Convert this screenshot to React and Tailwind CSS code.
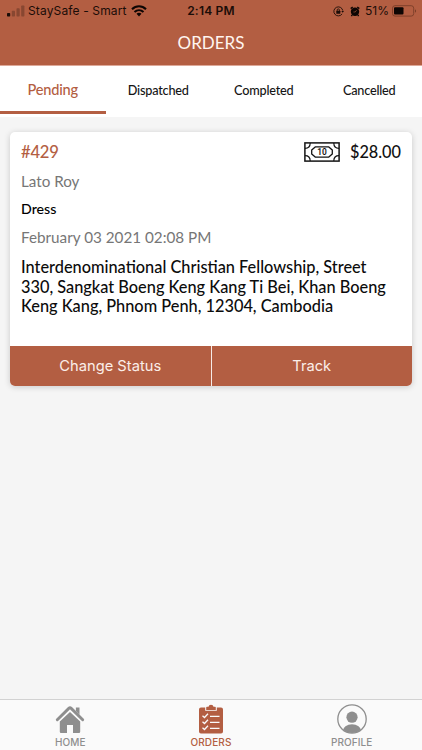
const tabs = ['Pending', 'Dispatched', 'Completed', 'Cancelled']

function SignalIcon() {
  return (
    <svg width="18" height="12" viewBox="0 0 18 12" className="shrink-0 fill-[#1b0d08]">
      <rect x="0" y="8" width="3.2" height="3.4" rx="0.7" />
      <g opacity="0.28">
        <rect x="4.8" y="5.8" width="3.2" height="5.6" rx="0.7" />
        <rect x="9.5" y="3.2" width="3.2" height="8.2" rx="0.7" />
        <rect x="14.2" y="0.6" width="3.2" height="10.8" rx="0.7" />
      </g>
    </svg>
  )
}

function WifiIcon() {
  return (
    <svg width="16" height="12" viewBox="0 0 16 12" className="shrink-0" fill="none" stroke="#0d0503">
      <path d="M1 4.2C5 0.3 11 0.3 15 4.2" strokeWidth="2.1" />
      <path d="M3.5 7C6.1 4.5 9.9 4.5 12.5 7" strokeWidth="2" />
      <path d="M8 11.4 5.5 8.8C7 7.5 9 7.5 10.5 8.8Z" fill="#0d0503" stroke="none" />
    </svg>
  )
}

function RotationLockIcon() {
  return (
    <svg width="11" height="11" viewBox="0 0 11 11" className="shrink-0" fill="none" stroke="#1b0d08">
      <path d="M9.1 7.9A4.5 4.5 0 1 1 9.8 4.6" strokeWidth="0.9" />
      <path d="M8.3 5h2.7L9.7 6.7Z" fill="#1b0d08" stroke="none" />
      <rect x="3.3" y="4.8" width="4" height="3" rx="0.4" fill="#1b0d08" stroke="none" />
      <path d="M4.2 5V4a1.1 1.1 0 0 1 2.2 0v1" strokeWidth="0.8" />
    </svg>
  )
}

function AlarmIcon() {
  return (
    <svg width="10" height="11" viewBox="0 0 10 11" className="shrink-0" fill="none" stroke="#0d0503">
      <circle cx="5" cy="5.7" r="4.2" fill="#0d0503" stroke="none" />
      <path d="M0.7 2.6 2.7 1M9.3 2.6 7.3 1M2.2 9 1.4 10.2M7.8 9 8.6 10.2" strokeWidth="1.4" />
      <path d="M5.2 6 6.6 4.2M5.3 6H3.4" stroke="#b35e42" strokeWidth="0.6" />
    </svg>
  )
}

function BatteryIcon() {
  return (
    <svg width="25" height="12" viewBox="0 0 25 12" className="shrink-0">
      <rect x="0.5" y="0.7" width="21.2" height="10.4" rx="2.5" fill="none" stroke="#7a3d28" strokeWidth="0.9" />
      <rect x="2" y="2.2" width="9.5" height="7.4" rx="1" fill="#0d0503" />
      <path d="M23 4.2v3.5c1.4-0.4 1.4-3.1 0-3.5Z" fill="#7a3d28" />
    </svg>
  )
}

function BanknoteIcon() {
  return (
    <svg width="36" height="20" viewBox="0 0 36 20" fill="none" stroke="#151515" strokeWidth="1.5">
      <rect x="0.9" y="0.9" width="34.2" height="18.2" />
      <path d="M1 6.3C4.2 6.3 6.2 4.2 6.2 1M35 6.3C31.8 6.3 29.8 4.2 29.8 1M1 13.7C4.2 13.7 6.2 15.8 6.2 19M35 13.7C31.8 13.7 29.8 15.8 29.8 19" strokeWidth="1.2" />
      <path d="M11.2 4.9H24.8L28.3 8.1V11.9L24.8 15.1H11.2L7.7 11.9V8.1Z" strokeWidth="1.3" strokeLinejoin="round" />
      <text x="18" y="13" textAnchor="middle" fill="#151515" stroke="none" fontFamily="Roboto, sans-serif" fontSize="8.4" fontWeight="600">10</text>
    </svg>
  )
}

function HomeIcon() {
  return (
    <svg width="30" height="29" viewBox="0 0 30 29" fill="#8e8e8e">
      <path d="M20.9 2.4h3.6v7.3l-3.6-3.6Z" />
      <path d="M4.8 16.6 15 7 25.2 16.6V26.8Q25.2 28 24 28H18V20H12V28H6Q4.8 28 4.8 26.8Z" />
      <path d="M3.4 16.6 15 5.8 26.6 16.6" fill="none" stroke="#fafafa" strokeWidth="0.9" />
      <path d="M2.3 14.8 13.8 3.4Q15 2.3 16.2 3.4L27.7 14.8" fill="none" stroke="#8e8e8e" strokeWidth="2.9" strokeLinecap="round" />
    </svg>
  )
}

function OrdersIcon() {
  return (
    <svg width="24" height="30" viewBox="0 0 24 30" fill="#b35e42">
      <path d="M2 3.5H6.2V6.8H17.8V3.5H22Q24 3.5 24 5.5V27.5Q24 29.5 22 29.5H2Q0 29.5 0 27.5V5.5Q0 3.5 2 3.5Z" />
      <path d="M7.2 6V3.5Q7.2 2.7 8 2.7H9.5Q9.8 0.8 12 0.8T14.5 2.7H16Q16.8 2.7 16.8 3.5V6Z" />
      <g fill="none" stroke="#fafafa" strokeWidth="1.3">
        <path d="M3.5 11.7 5.5 13.5 9 9.8M3.5 17.7 5.5 19.5 9 15.8M3.5 23.7 5.5 25.5 9 21.8" />
        <path d="M11 12.4H20.5M11 18.4H20.5M11 24.4H20.5" />
      </g>
    </svg>
  )
}

function ProfileIcon() {
  return (
    <svg width="30" height="30" viewBox="0 0 30 30">
      <clipPath id="avatar">
        <circle cx="15" cy="15" r="14" />
      </clipPath>
      <g fill="#8e8e8e" clipPath="url(#avatar)">
        <circle cx="15" cy="13.2" r="5.6" />
        <ellipse cx="15" cy="27" rx="9.2" ry="6.8" />
      </g>
      <circle cx="15" cy="15" r="14.2" fill="none" stroke="#8e8e8e" strokeWidth="1.3" />
    </svg>
  )
}

const navItems = [
  { label: 'HOME', icon: HomeIcon },
  { label: 'ORDERS', icon: OrdersIcon, active: true },
  { label: 'PROFILE', icon: ProfileIcon },
]

function StatusBar() {
  return (
    <div className="grid h-[22px] grid-cols-[1fr_auto_1fr] items-center pr-[5px] pl-[7px] font-[Inter,sans-serif] text-[12px] text-[#1b0d08]">
      <div className="flex items-center whitespace-nowrap">
        <SignalIcon />
        <span className="mr-[5px] ml-[3px] w-[98px] tracking-[0.14px]">StaySafe - Smart</span>
        <WifiIcon />
      </div>
      <span className="-ml-[2px] font-semibold tracking-[0.2px]">2:14 PM</span>
      <div className="flex items-center justify-end">
        <RotationLockIcon />
        <span className="ml-[6px] flex"><AlarmIcon /></span>
        <span className="mr-[3px] ml-[5px]">51%</span>
        <BatteryIcon />
      </div>
    </div>
  )
}

function OrderCard() {
  return (
    <article className="mx-[10px] mt-[15px] flex h-[254px] flex-col overflow-hidden rounded-[5px] bg-white shadow-[0_1px_6px_rgba(0,0,0,0.18)]">
      <div className="flex-1 px-[11px] pt-2">
        <div className="flex h-6 items-center justify-between">
          <span className="text-[16.6px] font-medium tracking-[-0.2px] text-[#b35e42]">#429</span>
          <div className="flex items-center gap-[10px]">
            <BanknoteIcon />
            <span className="text-[16.3px] font-medium text-[#111]">$28.00</span>
          </div>
        </div>
        <p className="mt-[5px] text-[15.2px] leading-6 text-[#767676]">Lato Roy</p>
        <p className="mt-1 text-[14.2px] leading-6 font-medium text-black">Dress</p>
        <p className="mt-1 text-[15.25px] leading-6 text-[#767676]">February 03 2021 02:08 PM</p>
        <p className="mt-2 text-[16.33px] leading-[19.5px] font-medium whitespace-nowrap text-[#0c0c0c]">
          Interdenominational Christian Fellowship, Street
          <br />
          330, Sangkat Boeng Keng Kang Ti Bei, Khan Boeng
          <br />
          Keng Kang, Phnom Penh, 12304, Cambodia
        </p>
      </div>
      <div className="grid h-[40px] grid-cols-2 gap-px bg-[#f7ebe7] font-[Inter,sans-serif] text-[14.7px] text-[#fbeee9]">
        <button className="bg-[#b35e42] pt-px">Change Status</button>
        <button className="bg-[#b35e42] pt-px">Track</button>
      </div>
    </article>
  )
}

export default function App() {
  return (
    <div className="flex h-[750px] w-[422px] flex-col overflow-hidden bg-[#f5f5f5] font-[Lato,sans-serif]">
      <header className="h-[65px] bg-[#b35e42]">
        <StatusBar />
        <h1 className="text-center text-[17px] leading-[42px] text-[#fff5f0]">ORDERS</h1>
      </header>
      <nav className="grid h-[52px] grid-cols-4 border-t border-[#dda999] bg-white">
        {tabs.map((tab, i) => (
          <button
            key={tab}
            className={
              i === 0
                ? 'mb-[3px] border-b-3 border-[#b35e42] pt-[3px] text-[14.6px] font-medium tracking-[-0.2px] text-[#b35e42]'
                : 'pb-[1px] text-[12.7px] font-medium tracking-[-0.22px] text-[#151515]'
            }
          >
            {tab}
          </button>
        ))}
      </nav>
      <main className="flex-1">
        <OrderCard />
      </main>
      <footer className="grid h-[51px] grid-cols-3 border-t border-[#d2d2d2] bg-[#fafafa] font-[Inter,sans-serif] text-[10px]">
        {navItems.map(({ label, icon: Icon, active }) => (
          <div
            key={label}
            className={`flex flex-col items-center font-medium tracking-[0.1px] ${active ? 'text-[#b35e42]' : 'text-[#8e8e8e]'}`}
          >
            <span className="flex h-[35px] items-end pb-[1px]">
              <Icon />
            </span>
            <span className="leading-[14px]">{label}</span>
          </div>
        ))}
      </footer>
    </div>
  )
}
